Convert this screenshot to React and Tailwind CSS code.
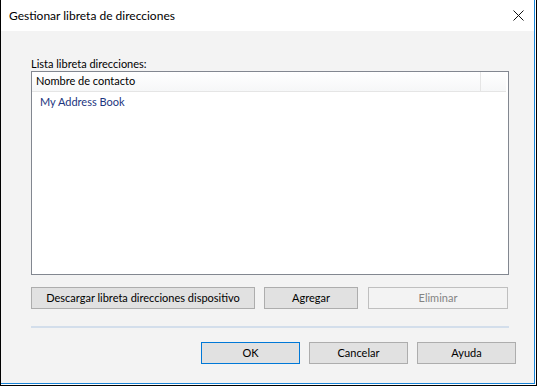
export default function App() {
  const font = { fontFamily: '"Segoe UI", Lato, "Liberation Sans", sans-serif' };
  return (
    <div className="w-[537px] h-[386px] bg-black pl-px pr-px pb-px flex" style={font}>
      <div className="flex-1 flex bg-white pr-px pb-px">
        <div className="flex-1 flex flex-col border-r border-b border-[#1883d7]">
          {/* Title bar */}
          <div className="h-[31px] bg-white flex items-center justify-between pl-2 pr-[10px]">
            <span className="text-[12px] text-black leading-none">Gestionar libreta de direcciones</span>
            <svg width="11" height="11" viewBox="0 0 11 11" className="mr-[0px]">
              <path d="M0.5 0.5 L10.5 10.5 M10.5 0.5 L0.5 10.5" stroke="#111" strokeWidth="1" />
            </svg>
          </div>

          {/* Body */}
          <div className="flex-1 bg-[#f3f3f3] flex flex-col pl-[30px]">
            <div className="mt-[25px] h-[15px] text-[11px] leading-[15px] text-black">Lista libreta direcciones:</div>

            {/* List view */}
            <div className="w-[478px] h-[204px] border border-[#828790] bg-white flex flex-col">
              <div className="flex h-[20px] border-b border-[#e5e5e5] w-[474px]">
                <div className="w-[449px] h-full bg-gradient-to-b from-white to-[#f6f7f8] border-r border-[#e5e5e5] flex items-center pl-[4px] text-[11px] text-black">
                  Nombre de contacto
                </div>
                <div className="flex-1 h-full bg-gradient-to-b from-white to-[#f6f7f8]"></div>
              </div>
              <div className="pl-[8px] pt-[2px] text-[11px] leading-[15px] text-[#1c3580]">My Address Book</div>
            </div>

            {/* Action buttons */}
            <div className="flex mt-[12px] h-[22px] text-[11px]">
              <button className="w-[224px] h-full bg-[#e1e1e1] border border-[#adadad] text-black">
                Descargar libreta direcciones dispositivo
              </button>
              <button className="ml-[9px] w-[94px] h-full bg-[#e1e1e1] border border-[#adadad] text-black">
                Agregar
              </button>
              <button className="ml-[10px] w-[140px] h-full bg-[#f3f3f3] border border-[#bfbfbf] text-[#838383]">
                Eliminar
              </button>
            </div>

            <div className="mt-[17px] w-[478px] h-[2px] bg-[#d3deeb]"></div>

            {/* Dialog buttons */}
            <div className="flex mt-[14px] h-[22px] text-[11px] pl-[170px]">
              <button className="w-[99px] h-full bg-[#e1e1e1] border border-[#0078d7] text-black">OK</button>
              <button className="ml-[9px] w-[99px] h-full bg-[#e1e1e1] border border-[#adadad] text-black">Cancelar</button>
              <button className="ml-[9px] w-[99px] h-full bg-[#e1e1e1] border border-[#adadad] text-black">Ayuda</button>
            </div>
          </div>
        </div>
      </div>
    </div>
  );
}
